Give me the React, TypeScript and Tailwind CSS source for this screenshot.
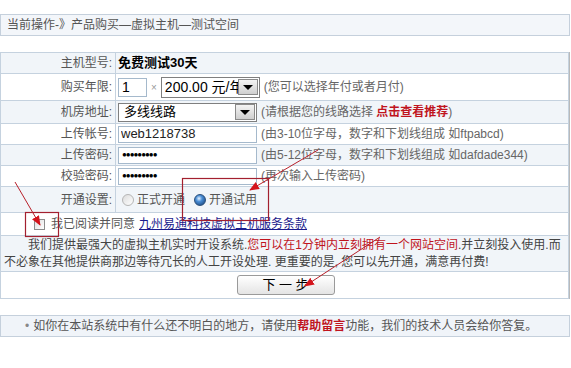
import React from 'react';

const FONT = "font-['Liberation_Sans','Noto_Sans_CJK_SC',sans-serif]";

function Label({ text }: { text: string }) {
  return (
    <div className="w-[115px] shrink-0 border-r border-[#c5d2df] pr-[3px] text-right text-[#555] flex items-center justify-end h-full">
      {text}
    </div>
  );
}

function Row({ h, bg, label, children, last }: { h: string; bg?: boolean; label?: string; children: React.ReactNode; last?: boolean }) {
  return (
    <div className={`flex items-stretch ${h} ${bg ? 'bg-[#f1f5f9]' : 'bg-white'} ${last ? '' : 'border-b border-[#c5d2df]'}`}>
      {label !== undefined && <Label text={label} />}
      <div className="flex items-center pl-[2px] flex-1 min-w-0">{children}</div>
    </div>
  );
}

function Hint({ children }: { children: React.ReactNode }) {
  return <span className="ml-[4px] text-[#666] whitespace-nowrap">{children}</span>;
}

function DropBtn() {
  return (
    <div className="w-[20px] h-[16px] shrink-0 border border-[#8a8a8a] bg-gradient-to-b from-[#f4f4f4] to-[#cfcfcf] flex items-center justify-center">
      <div className="w-0 h-0 border-l-[5px] border-r-[5px] border-t-[5px] border-l-transparent border-r-transparent border-t-black" />
    </div>
  );
}

function Radio({ checked }: { checked?: boolean }) {
  return checked ? (
    <div className="w-[12px] h-[12px] rounded-full border border-[#2a4f7a] bg-[radial-gradient(circle_at_40%_35%,#e6f3ff_0,#4a8ed6_35%,#123a6e_100%)]" />
  ) : (
    <div className="w-[12px] h-[12px] rounded-full border border-[#b5b5b5] bg-gradient-to-br from-[#dcdcdc] to-[#ffffff]" />
  );
}

export default function App() {
  return (
    <div className={`relative w-[571px] h-[368px] pt-[14px] bg-white text-[12px] ${FONT}`}>
      {/* 顶部导航 */}
      <div className="h-[22px] w-[570px] border border-[#c5d0dc] bg-[#f3f6fa] pl-[6px] flex items-center text-[#555]">
        当前操作-》产品购买—虚拟主机—测试空间
      </div>

      {/* 表单 */}
      <div className="mt-[16px] w-[569px] border border-[#c5d2df] shadow-[1px_0_0_#b9b9b9]">
        <Row h="h-[21px]" bg label="主机型号:">
          <span className="font-bold text-black text-[13px]">免费测试30天</span>
        </Row>
        <Row h="h-[27px]" label="购买年限:">
          <input
            readOnly
            defaultValue="1"
            className="w-[29px] h-[19px] border border-[#a5b9cc] px-[3px] text-[14px] text-black outline-none"
          />
          <span className="mx-[4px] text-[#999] text-[10px]">×</span>
          <div className="w-[99px] h-[21px] border border-[#7f7f7f] flex items-center justify-between pl-[3px] pr-[1px] bg-white">
            <span className="text-[14px] text-black overflow-hidden whitespace-nowrap w-[74px]">200.00 元/年</span>
            <DropBtn />
          </div>
          <Hint>(您可以选择年付或者月付)</Hint>
        </Row>
        <Row h="h-[23px]" bg label="机房地址:">
          <div className="w-[139px] h-[19px] border border-[#7f7f7f] flex items-center justify-between pl-[5px] pr-[1px] bg-white">
            <span className="text-[13px] text-black">多线线路</span>
            <DropBtn />
          </div>
          <Hint>
            (请根据您的线路选择 <span className="text-[#c0141e] font-bold">点击查看推荐</span>)
          </Hint>
        </Row>
        <Row h="h-[21px]" label="上传帐号:">
          <input
            readOnly
            defaultValue="web1218738"
            className="w-[139px] h-[17px] border border-[#a5b9cc] px-[2px] text-[13px] text-[#222] outline-none"
          />
          <Hint>(由3-10位字母，数字和下划线组成 如ftpabcd)</Hint>
        </Row>
        <Row h="h-[21px]" bg label="上传密码:">
          <div className="w-[139px] h-[17px] border border-[#a5b9cc] bg-white pl-[3px] flex items-center text-[8px] tracking-[-1px] text-black">
            ●●●●●●●●●
          </div>
          <Hint>(由5-12位字母，数字和下划线组成 如dafdade344)</Hint>
        </Row>
        <Row h="h-[21px]" label="校验密码:">
          <div className="w-[139px] h-[17px] border border-[#a5b9cc] bg-white pl-[3px] flex items-center text-[8px] tracking-[-1px] text-black">
            ●●●●●●●●●
          </div>
          <Hint>(再次输入上传密码)</Hint>
        </Row>
        <Row h="h-[26px]" bg label="开通设置:">
          <div className="flex items-center gap-[3px] ml-[4px] text-[#555]">
            <Radio />
            <span>正式开通</span>
          </div>
          <div className="flex items-center gap-[3px] ml-[9px] text-[#555]">
            <Radio checked />
            <span>开通试用</span>
          </div>
        </Row>
        <Row h="h-[23px]">
          <div className="flex items-center ml-[31px] text-[#555]">
            <div className="w-[11px] h-[11px] border border-[#8c8c8c] bg-gradient-to-br from-[#dedede] to-white" />
            <span className="ml-[6px]">我已阅读并同意</span>
            <a className="ml-[4px] text-[#1a1a8c] underline">九州易通科技虚拟主机服务条款</a>
          </div>
        </Row>
        <Row h="h-[36px]" bg>
          <p className="pl-[1px] indent-[24px] leading-[17px] text-[#444] whitespace-nowrap">
            我们提供最强大的虚拟主机实时开设系统.
            <span className="text-[#c0141e]">您可以在1分钟内立刻拥有一个网站空间</span>
            .并立刻投入使用.而
            <br />
            不必象在其他提供商那边等待冗长的人工开设处理. 更重要的是, 您可以先开通，满意再付费!
          </p>
        </Row>
        <Row h="h-[26px]" last>
          <div className="flex-1 flex justify-center">
            <button className="w-[98px] h-[20px] rounded-[3px] border border-[#9a9a9a] bg-gradient-to-b from-white to-[#e4e4e4] text-[13px] text-black leading-[18px]">
              下 一 步
            </button>
          </div>
        </Row>
      </div>

      {/* 底部提示 */}
      <div className="mt-[16px] h-[22px] w-[570px] border border-[#c5d0dc] bg-[#f0f4f9] pl-[24px] flex items-center text-[#555]">
        <span className="text-[#888] mr-[4px]">•</span>
        如你在本站系统中有什么还不明白的地方，请使用
        <span className="text-[#c0141e] font-bold">帮助留言</span>
        功能，我们的技术人员会给你答复。
      </div>

      {/* 红色标注 */}
      <svg className="absolute left-0 top-0 pointer-events-none" width="571" height="368">
        <defs>
          <marker id="ah" markerWidth="10" markerHeight="8" refX="9" refY="4" orient="auto" markerUnits="userSpaceOnUse">
            <path d="M0,0 L10,4 L0,8 Z" fill="#d4141c" />
          </marker>
        </defs>
        <rect x="25.5" y="212.5" width="33" height="24" fill="none" stroke="#a3202f" strokeWidth="1.2" />
        <rect x="182.5" y="178.5" width="86" height="42" fill="none" stroke="#a3202f" strokeWidth="1.2" />
        <line x1="15" y1="182" x2="40" y2="225" stroke="#b8202a" strokeWidth="1" markerEnd="url(#ah)" />
        <line x1="318" y1="150" x2="250" y2="190" stroke="#b8202a" strokeWidth="1" markerEnd="url(#ah)" />
        <line x1="380" y1="237" x2="305" y2="286" stroke="#b8202a" strokeWidth="1" markerEnd="url(#ah)" />
      </svg>
    </div>
  );
}
